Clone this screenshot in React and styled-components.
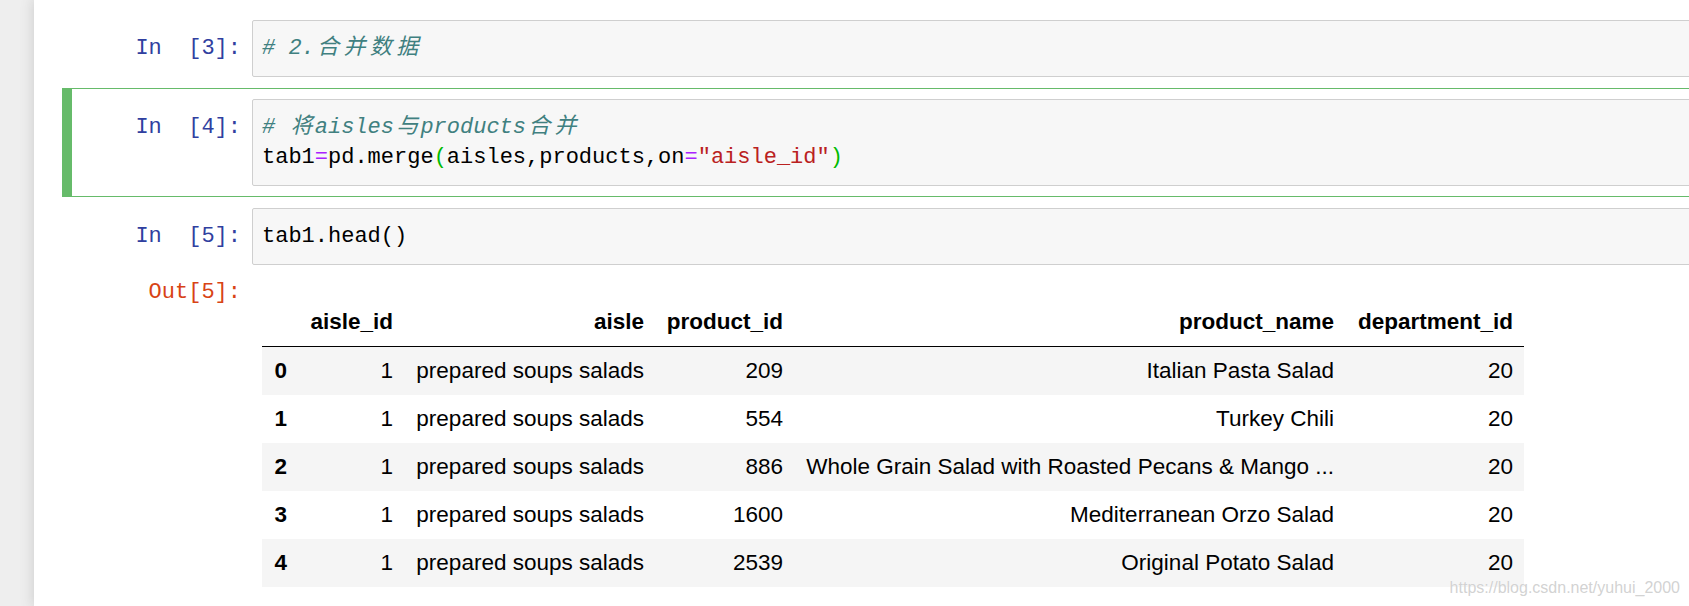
import React from 'react'
import styled, { createGlobalStyle } from 'styled-components'

const GlobalStyle = createGlobalStyle`
  html, body {
    margin: 0;
    padding: 0;
    overflow: hidden;
    background: #eeeeee;
  }
`

const MONO = `"Liberation Mono", "Noto Sans CJK SC", monospace`

const Page = styled.div`
  position: relative;
  width: 1689px;
  height: 606px;
  overflow: hidden;
  display: flex;
  box-sizing: border-box;
  padding-left: 34px;
  background: #eeeeee;
`

const Notebook = styled.div`
  flex: 0 0 1720px;
  min-height: 606px;
  box-sizing: border-box;
  padding: 9px 0 0 28px;
  background: #fff;
  box-shadow: 0 0 12px 1px rgba(87, 87, 87, 0.2);
`

const Cell = styled.div`
  position: relative;
  display: flex;
  flex-direction: column;
  padding: 10px;
  border: 1px solid ${p => (p.$selected ? '#66BB6A' : 'transparent')};

  &::before {
    content: '';
    display: ${p => (p.$selected ? 'block' : 'none')};
    position: absolute;
    left: -1px;
    top: -1px;
    bottom: -1px;
    width: 10px;
    background: #66BB6A;
  }
`

const Row = styled.div`
  display: flex;
  align-items: flex-start;
`

const Prompt = styled.div`
  flex: 0 0 179px;
  box-sizing: border-box;
  padding: ${p => (p.$out ? '13px' : '13.5px')} 11px 0 0;
  text-align: right;
  font-family: ${MONO};
  font-size: 22px;
  line-height: 30px;
  white-space: pre;
  color: ${p => (p.$out ? '#D84315' : '#303F9F')};
`

const CodeBox = styled.div`
  flex: 1;
  box-sizing: border-box;
  padding: 12.5px 9px;
  background: #f7f7f7;
  border: 1px solid #cfcfcf;
  border-radius: 2px;
  font-family: ${MONO};
  font-size: 22px;
  line-height: 30px;
  color: #000;
  white-space: pre;
`

const Line = styled.div`
  height: 30px;
`

const Comment = styled.span`
  color: #408080;
  font-style: italic;
`

const Op = styled.span`
  color: #AA22FF;
`

const Str = styled.span`
  color: #BA2121;
`

const Bracket = styled.span`
  color: #00bb00;
`

// CJK glyphs take two monospace cells in the original font
const Wide = styled.span`
  display: inline-block;
  width: 2ch;
  text-align: center;
`

const Output = styled.div`
  flex: 1;
  padding: 33px 0 0 10px;
`

const Table = styled.table`
  table-layout: fixed;
  width: 1262px;
  border-collapse: collapse;
  border-spacing: 0;
  font-family: "Liberation Sans", Arial, sans-serif;
  font-size: 22.5px;
  color: #000;

  thead tr {
    border-bottom: 1px solid #000;
  }

  th, td {
    padding: 12px 11px;
    line-height: 24px;
    text-align: right;
    white-space: nowrap;
    vertical-align: middle;
  }

  th {
    font-weight: bold;
  }

  tbody tr:nth-child(odd) {
    background: #f5f5f5;
  }
`

const Col = styled.col`
  width: ${p => p.$w}px;
`

const Watermark = styled.div`
  position: absolute;
  right: 9px;
  bottom: 9px;
  font-family: "Liberation Sans", Arial, sans-serif;
  font-size: 16px;
  color: rgba(205, 205, 205, 0.9);
  text-shadow: 0 0 1px #fff;
`

const cjk = s => s.split('').map((c, i) => <Wide key={i}>{c}</Wide>)

const columns = [36, 106, 251, 139, 551, 179]
const headers = ['', 'aisle_id', 'aisle', 'product_id', 'product_name', 'department_id']
const rows = [
  [0, 1, 'prepared soups salads', 209, 'Italian Pasta Salad', 20],
  [1, 1, 'prepared soups salads', 554, 'Turkey Chili', 20],
  [2, 1, 'prepared soups salads', 886, 'Whole Grain Salad with Roasted Pecans & Mango ...', 20],
  [3, 1, 'prepared soups salads', 1600, 'Mediterranean Orzo Salad', 20],
  [4, 1, 'prepared soups salads', 2539, 'Original Potato Salad', 20],
]

export default function App() {
  return (
    <>
      <GlobalStyle />
      <Page>
        <Notebook>
          <Cell>
            <Row>
              <Prompt>{'In\u00a0\u00a0[3]:'}</Prompt>
              <CodeBox>
                <Line><Comment># 2.{cjk('合并数据')}</Comment></Line>
              </CodeBox>
            </Row>
          </Cell>

          <Cell $selected>
            <Row>
              <Prompt>{'In\u00a0\u00a0[4]:'}</Prompt>
              <CodeBox>
                <Line>
                  <Comment># {cjk('将')}aisles{cjk('与')}products{cjk('合并')}</Comment>
                </Line>
                <Line>
                  tab1<Op>=</Op>pd.merge<Bracket>(</Bracket>aisles,products,on<Op>=</Op>
                  <Str>"aisle_id"</Str><Bracket>)</Bracket>
                </Line>
              </CodeBox>
            </Row>
          </Cell>

          <Cell>
            <Row>
              <Prompt>{'In\u00a0\u00a0[5]:'}</Prompt>
              <CodeBox>
                <Line>tab1.head()</Line>
              </CodeBox>
            </Row>
            <Row>
              <Prompt $out>Out[5]:</Prompt>
              <Output>
                <Table>
                  <colgroup>
                    {columns.map((w, i) => <Col key={i} $w={w} />)}
                  </colgroup>
                  <thead>
                    <tr>
                      {headers.map((h, i) => <th key={i}>{h}</th>)}
                    </tr>
                  </thead>
                  <tbody>
                    {rows.map(r => (
                      <tr key={r[0]}>
                        <th>{r[0]}</th>
                        {r.slice(1).map((v, i) => <td key={i}>{v}</td>)}
                      </tr>
                    ))}
                  </tbody>
                </Table>
              </Output>
            </Row>
          </Cell>
        </Notebook>
        <Watermark>https://blog.csdn.net/yuhui_2000</Watermark>
      </Page>
    </>
  )
}
